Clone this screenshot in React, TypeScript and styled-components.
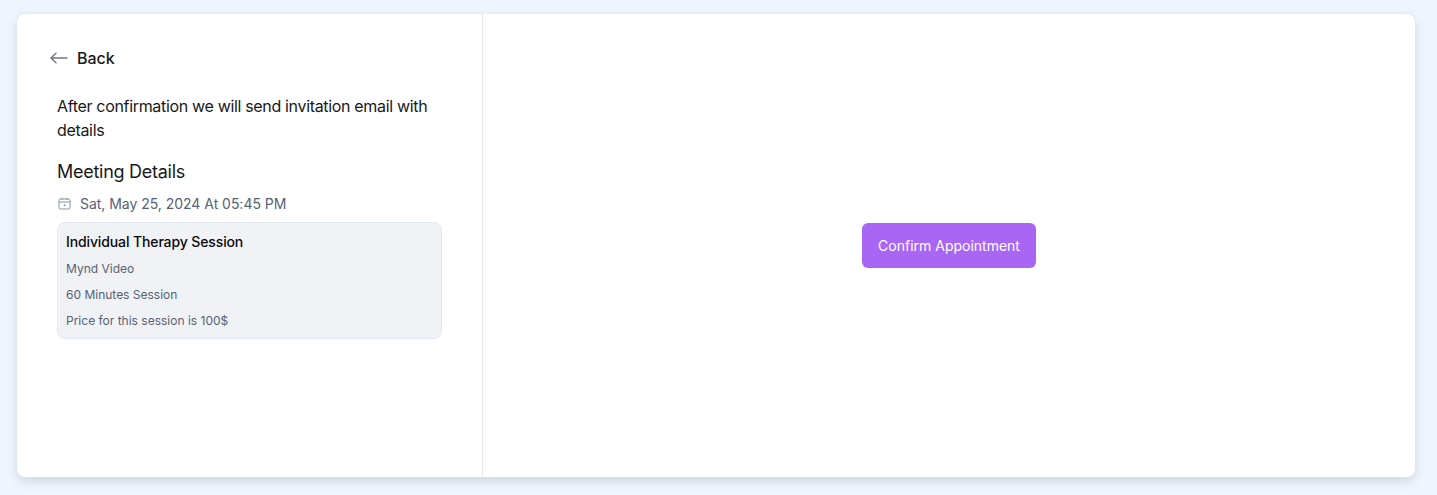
import * as React from "react";
import styled, { createGlobalStyle } from "styled-components";

const GlobalStyle = createGlobalStyle`
    html, body {
        margin: 0;
        padding: 0;
        background-color: #eff6ff;
        font-family: Inter, "Liberation Sans", sans-serif;
    }
`;

const Page = styled.div`
    box-sizing: border-box;
    height: 495px;
    padding: 14px 22px 18px 17px;
`;

const Card = styled.main`
    display: grid;
    grid-template-columns: 466px 1fr;
    height: 100%;
    box-sizing: border-box;
    background-color: #ffffff;
    border-radius: 8px;
    box-shadow: 0 0 0 1px #e2e8f080, 0 4px 12px -1px rgba(100, 116, 139, 0.3);
    overflow: hidden;
`;

const Sidebar = styled.section`
    box-sizing: border-box;
    padding: 32px 40px 0 33px;
    border-right: 1px solid #e2e8f0;
`;

const BackRow = styled.button`
    display: flex;
    align-items: center;
    gap: 9px;
    height: 24px;
    padding: 0;
    border: none;
    background: none;
    font: inherit;
    font-size: 16px;
    font-weight: 500;
    color: #18181b;
`;

const Content = styled.div`
    margin-top: 24px;
    padding-left: 7px;
`;

const Intro = styled.p`
    margin: 0;
    font-size: 16px;
    line-height: 24px;
    letter-spacing: -0.33px;
    color: #18181b;
`;

const Heading = styled.h2`
    margin: 17px 0 0;
    font-size: 18px;
    font-weight: 400;
    line-height: 26px;
    letter-spacing: -0.27px;
    color: #18181b;
`;

const DateRow = styled.div`
    display: flex;
    align-items: center;
    gap: 9px;
    margin-top: 8px;
    padding-left: 1px;
    height: 20px;
    font-size: 14px;
    letter-spacing: -0.03px;
    color: #566277;
`;

const SessionBox = styled.div`
    box-sizing: border-box;
    height: 117px;
    margin-top: 9px;
    padding: 9px 8px 0;
    background-color: #f1f2f6;
    border: 1px solid #e2e8f0;
    border-radius: 8px;
`;

const SessionTitle = styled.div`
    font-size: 14px;
    font-weight: 500;
    line-height: 20px;
    letter-spacing: -0.12px;
    color: #09090b;
`;

const SessionLine = styled.div`
    margin-top: 8px;
    font-size: 12px;
    line-height: 18px;
    color: #566277;
`;

const ActionPanel = styled.section`
    display: flex;
    align-items: center;
    justify-content: center;
`;

const ConfirmButton = styled.button`
    height: 45px;
    width: 174px;
    padding: 0;
    border: none;
    border-radius: 6px;
    background-color: #a966f5;
    color: #ffffff;
    font: inherit;
    font-size: 14px;
    font-weight: 400;
`;

const App: React.FC = () => {
    return (
        <Page>
            <GlobalStyle />
            <Card>
                <Sidebar>
                    <BackRow>
                        <svg width="18" height="12" viewBox="0 0 18 12" fill="none" stroke="#75718c" strokeWidth="1.3">
                            <path d="M17.5 6H1M6.5 .8 1 6l5.500 5.200" />
                        </svg>
                        Back
                    </BackRow>
                    <Content>
                        <Intro>After confirmation we will send invitation email with details</Intro>
                        <Heading>Meeting Details</Heading>
                        <DateRow>
                            <svg width="13" height="13" viewBox="0 0 13 13" fill="none" stroke="#7b8696" strokeWidth="0.9">
                                <rect x="1" y="2" width="11" height="10" rx="1.500" />
                                <path d="M1 5h11M4 .8v2M9 .8v2" />
                                <path d="M5.800 7.500h1.400v1.400H5.800z" fill="#64748b" stroke="none" />
                            </svg>
                            Sat, May 25, 2024 At 05:45 PM
                        </DateRow>
                        <SessionBox>
                            <SessionTitle>Individual Therapy Session</SessionTitle>
                            <SessionLine>Mynd Video</SessionLine>
                            <SessionLine>60 Minutes Session</SessionLine>
                            <SessionLine>Price for this session is 100$</SessionLine>
                        </SessionBox>
                    </Content>
                </Sidebar>
                <ActionPanel>
                    <ConfirmButton>Confirm Appointment</ConfirmButton>
                </ActionPanel>
            </Card>
        </Page>
    );
};

export default App;
